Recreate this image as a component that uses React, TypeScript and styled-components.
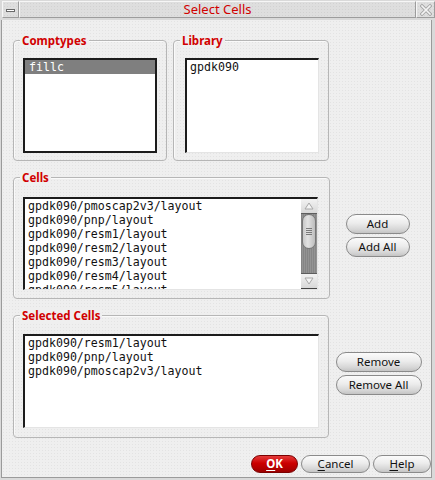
import React from "react";
import styled, { createGlobalStyle, css } from "styled-components";

const GlobalStyle = createGlobalStyle`
  html, body { margin: 0; padding: 0; background: #dcdcdc; }
  * { box-sizing: border-box; }
`;

const dots = css`
  background-color: #efefef;
  background-image: radial-gradient(circle, #e3e3e3 0.6px, transparent 0.8px);
  background-size: 3px 3px;
`;

const Window = styled.div`
  width: 435px;
  height: 480px;
  background: #d9d9d9;
  padding: 0 3px 2px 1px;
  display: flex;
  flex-direction: column;
`;

const TitleBar = styled.div`
  height: 20px;
  display: flex;
  padding: 1px 0 2px 2px;
  margin-left: -1px;
  margin-right: -3px;
`;

const TitleCell = styled.div<{ $w?: number }>`
  ${({ $w }) => ($w ? `width: ${$w}px;` : "flex: 1;")}
  height: 17px;
  border: 1px solid;
  border-color: #f6f6f6 #9c9c9c #9c9c9c #f6f6f6;
  background-color: #dedede;
  background-image: radial-gradient(circle, #d2d2d2 0.6px, transparent 0.8px);
  background-size: 3px 3px;
  display: flex;
  align-items: center;
  justify-content: center;
  font-family: "Noto Sans", sans-serif;
  font-size: 13px;
  color: #d10000;
  line-height: 15px;
`;

const MinBar = styled.span`
  width: 9px;
  height: 3px;
  background: #fff;
  border: 1px solid #6a6a6a;
  margin-top: 2px;
`;

const Content = styled.div`
  flex: 1;
  ${dots};
  border-left: 1px solid #9a9a9a;
  border-right: 1px solid #9a9a9a;
  border-bottom: 1px solid #9a9a9a;
  padding: 20px 0 0 11px;
  display: flex;
  flex-direction: column;
`;

const Row = styled.div<{ $mt?: number }>`
  display: flex;
  align-items: center;
  margin-top: ${({ $mt }) => $mt ?? 0}px;
`;

const TopRow = styled.div`
  display: flex;
  gap: 6px;
`;

const Group = styled.div<{ $w: number; $h: number }>`
  width: ${({ $w }) => $w}px;
  height: ${({ $h }) => $h}px;
  flex: none;
  border: 1px solid #b6b6b6;
  border-radius: 4px;
  box-shadow: inset 1px 1px 0 #fafafa;
  display: flex;
  flex-direction: column;
  align-items: flex-start;
`;

const GroupTitle = styled.span`
  margin: -7px 0 0 6px;
  padding: 0 2px;
  background: #efefef;
  color: #d10000;
  font-family: "Noto Sans", sans-serif;
  font-weight: bold;
  font-size: 11.5px;
  line-height: 13px;
`;

const ListBox = styled.div<{ $w: number; $h: number; $mt: number; $ml: number; $focus?: boolean }>`
  width: ${({ $w }) => $w}px;
  height: ${({ $h }) => $h}px;
  margin-top: ${({ $mt }) => $mt}px;
  margin-left: ${({ $ml }) => $ml}px;
  background: #fff;
  border-style: solid;
  border-width: ${({ $focus }) => ($focus ? "2px" : "2px 1px 1px 2px")};
  border-color: ${({ $focus }) =>
    $focus ? "#1c1c1c" : "#1c1c1c #e4e4e4 #e4e4e4 #1c1c1c"};
  display: flex;
  overflow: hidden;
`;

const Items = styled.div`
  flex: 1;
  overflow: hidden;
  font-family: "DejaVu Sans Mono", monospace;
  font-size: 11.6px;
  line-height: 14px;
  color: #111;
`;

const Item = styled.div<{ $sel?: boolean }>`
  height: 14px;
  padding-left: 3px;
  white-space: nowrap;
  ${({ $sel }) => $sel && "background: #7f7f7f; color: #fff; padding-left: 4px;"}
`;

const ScrollBar = styled.div`
  width: 16px;
  flex: none;
  display: flex;
  flex-direction: column;
  background-color: #8a8a8a;
  background-image: repeating-linear-gradient(90deg, #858585 0 1px, #939393 1px 2px);
  border-bottom: 1px solid #444;
`;

const ArrowBtn = styled.div`
  height: 15px;
  flex: none;
  background: linear-gradient(#f2f2f2, #d8d8d8);
  border-bottom: 1px solid #5d5d5d;
  display: flex;
  align-items: center;
  justify-content: center;
`;

const ArrowBtnDown = styled(ArrowBtn)`
  border-bottom: none;
  border-top: 1px solid #5d5d5d;
`;

const Track = styled.div`
  flex: 1;
  display: flex;
  flex-direction: column;
`;

const Thumb = styled.div`
  height: 35px;
  margin: 0 0 0 1px;
  width: 14px;
  border: 1px solid #777;
  border-radius: 7px;
  background: linear-gradient(90deg, #c8c8c8, #e2e2e2 40%, #bdbdbd);
  display: flex;
  flex-direction: column;
  align-items: center;
  justify-content: center;
  gap: 1px;
`;

const Grip = styled.span`
  width: 6px;
  height: 1px;
  background: #7a7a7a;
`;

const ButtonCol = styled.div<{ $pb?: number; $pr?: number }>`
  flex: 1;
  display: flex;
  flex-direction: column;
  align-items: center;
  gap: 3px;
  padding-bottom: ${({ $pb }) => $pb ?? 0}px;
  padding-right: ${({ $pr }) => $pr ?? 0}px;
`;

const Pill = styled.button<{ $w: number; $h?: number; $primary?: boolean }>`
  width: ${({ $w }) => $w}px;
  height: ${({ $h }) => $h ?? 20}px;
  padding: 0;
  border-radius: 10px;
  border: 1px solid #8a8a8a;
  background: linear-gradient(#fbfbfb, #ececec 45%, #d6d6d6 80%, #c4c4c4);
  font-family: "Noto Sans", sans-serif;
  font-size: 11.5px;
  line-height: 14px;
  color: #111;
  cursor: default;
  ${({ $primary }) =>
    $primary &&
    css`
      border-color: #7a0000;
      background: linear-gradient(#e43a3a, #cc0000 45%, #b00000 80%, #9a0000);
      color: #fff;
      font-weight: bold;
    `}
`;

const Footer = styled.div`
  margin-top: 17px;
  display: flex;
  justify-content: flex-end;
  gap: 3px;
`;

const U = styled.span`
  text-decoration: underline;
  text-underline-offset: 2px;
`;

const UpTri = () => (
  <svg width="10" height="8" viewBox="0 0 10 8">
    <polygon points="5,1 9,7 1,7" fill="#f4f4f4" stroke="#a8a8a8" strokeWidth="1" />
  </svg>
);
const DownTri = () => (
  <svg width="10" height="8" viewBox="0 0 10 8">
    <polygon points="1,1 9,1 5,7" fill="#f4f4f4" stroke="#a8a8a8" strokeWidth="1" />
  </svg>
);
const CloseX = () => (
  <svg width="12" height="12" viewBox="0 0 12 12">
    <path d="M2 2 L10 10 M10 2 L2 10" stroke="#a6a6a6" strokeWidth="3.4" strokeLinecap="square" />
    <path d="M2 2 L10 10 M10 2 L2 10" stroke="#f4f4f4" strokeWidth="1.6" strokeLinecap="square" />
  </svg>
);

const cells = [
  "gpdk090/pmoscap2v3/layout",
  "gpdk090/pnp/layout",
  "gpdk090/resm1/layout",
  "gpdk090/resm2/layout",
  "gpdk090/resm3/layout",
  "gpdk090/resm4/layout",
  "gpdk090/resm5/layout",
];

const selected = [
  "gpdk090/resm1/layout",
  "gpdk090/pnp/layout",
  "gpdk090/pmoscap2v3/layout",
];

export default function App() {
  return (
    <>
      <GlobalStyle />
      <Window>
        <TitleBar>
          <TitleCell $w={17}>
            <MinBar />
          </TitleCell>
          <TitleCell>Select Cells</TitleCell>
          <TitleCell $w={19}>
            <CloseX />
          </TitleCell>
        </TitleBar>
        <Content>
          <TopRow>
            <Group $w={154} $h={121}>
              <GroupTitle>Comptypes</GroupTitle>
              <ListBox $w={134} $h={95} $mt={11} $ml={9} $focus>
                <Items>
                  <Item $sel>fillc</Item>
                </Items>
              </ListBox>
            </Group>
            <Group $w={156} $h={121}>
              <GroupTitle>Library</GroupTitle>
              <ListBox $w={134} $h={95} $mt={11} $ml={11}>
                <Items>
                  <Item>gpdk090</Item>
                </Items>
              </ListBox>
            </Group>
          </TopRow>

          <Row $mt={16}>
            <Group $w={317} $h={122}>
              <GroupTitle>Cells</GroupTitle>
              <ListBox $w={295} $h={93} $mt={13} $ml={9}>
                <Items>
                  {cells.map((c) => (
                    <Item key={c}>{c}</Item>
                  ))}
                </Items>
                <ScrollBar>
                  <ArrowBtn>
                    <UpTri />
                  </ArrowBtn>
                  <Track>
                    <Thumb>
                      <Grip />
                      <Grip />
                      <Grip />
                      <Grip />
                    </Thumb>
                  </Track>
                  <ArrowBtnDown>
                    <DownTri />
                  </ArrowBtnDown>
                </ScrollBar>
              </ListBox>
            </Group>
            <ButtonCol $pb={5} $pr={6}>
              <Pill $w={64}>Add</Pill>
              <Pill $w={64}>Add All</Pill>
            </ButtonCol>
          </Row>

          <Row $mt={16}>
            <Group $w={316} $h={123}>
              <GroupTitle>Selected Cells</GroupTitle>
              <ListBox $w={296} $h={94} $mt={12} $ml={9}>
                <Items>
                  {selected.map((c) => (
                    <Item key={c}>{c}</Item>
                  ))}
                </Items>
              </ListBox>
            </Group>
            <ButtonCol $pb={7} $pr={3}>
              <Pill $w={86}>Remove</Pill>
              <Pill $w={86}>Remove All</Pill>
            </ButtonCol>
          </Row>

          <Footer>
            <Pill $w={47} $h={18} $primary>
              <U>O</U>K
            </Pill>
            <Pill $w={69} $h={18}>
              <U>C</U>ancel
            </Pill>
            <Pill $w={58} $h={18}>
              <U>H</U>elp
            </Pill>
          </Footer>
        </Content>
      </Window>
    </>
  );
}
